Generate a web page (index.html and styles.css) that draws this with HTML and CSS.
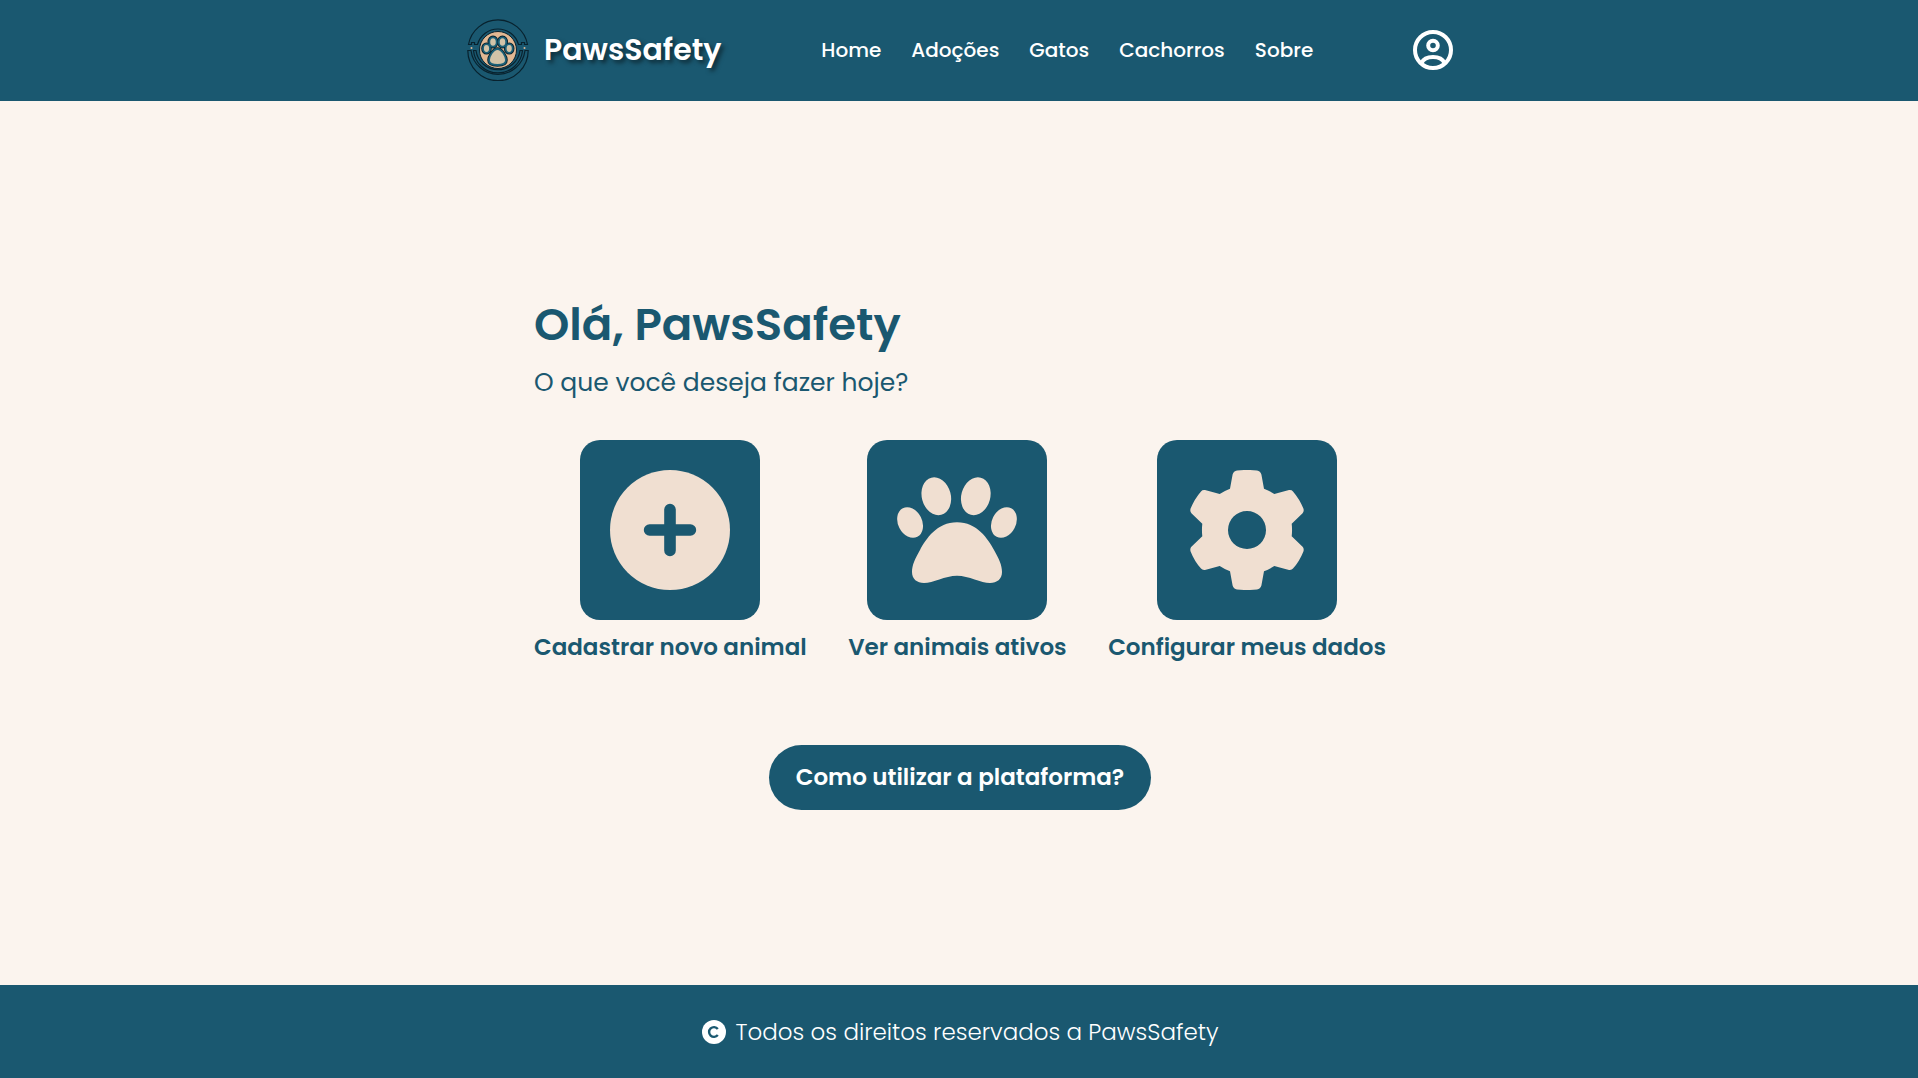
FILE: index.html
```html
<!DOCTYPE html>
<html lang="pt-BR">
<head>
<meta charset="utf-8">
<meta name="viewport" content="width=device-width, initial-scale=1">
<title>PawsSafety</title>
<link rel="stylesheet" href="styles.css">
</head>
<body>
<header class="header">
  <div class="header-inner">
    <a class="brand" href="#">
      <svg class="brand-logo" viewBox="0 0 62 62" aria-hidden="true">
        <g fill="none" stroke="#08222e" stroke-width="1.200">
          <path d="M1.500 25.500A30 30 0 0 1 60.500 25.500H57.500V23.500H54.500V25.500H51.500A21.300 21.300 0 0 0 10.500 25.500H7.500V23.500H4.500V25.500Z"/>
          <path d="M.8 31.500A30 30 0 0 0 61.200 31.500H58A27.200 27.200 0 0 1 4 31.500Z"/>
          <path d="M6.500 31.500A24.600 24.600 0 0 0 55.500 31.500H53A22.200 22.200 0 0 1 9 31.500Z"/>
        </g>
        <circle cx="31" cy="31" r="18.500" fill="#e2b893" stroke="#08222e"/>
        <circle cx="4.500" cy="29" r="1" fill="#e2b893"/>
        <circle cx="57.500" cy="29" r="1" fill="#e2b893"/>
        <g stroke="#08222e" stroke-width="3.600">
          <ellipse cx="26" cy="23" rx="3.700" ry="4.700"/>
          <ellipse cx="35.500" cy="23" rx="3.700" ry="4.700"/>
          <ellipse cx="19.500" cy="29.500" rx="3.500" ry="4.300"/>
          <ellipse cx="42.200" cy="29.500" rx="3.500" ry="4.300"/>
          <path d="M30.500 30C35 30 39 38 39 41C39 45 36 46 30.500 46C25 46 22 45 22 41C22 38 26 30 30.500 30Z"/>
        </g>
        <g fill="#d2c3a8" stroke="#1b6078" stroke-width="1.800">
          <ellipse cx="26" cy="23" rx="3.700" ry="4.700"/>
          <ellipse cx="35.500" cy="23" rx="3.700" ry="4.700"/>
          <ellipse cx="19.500" cy="29.500" rx="3.500" ry="4.300"/>
          <ellipse cx="42.200" cy="29.500" rx="3.500" ry="4.300"/>
          <path d="M30.500 30C35 30 39 38 39 41C39 45 36 46 30.500 46C25 46 22 45 22 41C22 38 26 30 30.500 30Z"/>
        </g>
      </svg>
      <span class="brand-name">PawsSafety</span>
    </a>
    <nav class="nav" aria-label="Principal">
      <a href="#">Home</a>
      <a href="#">Adoções</a>
      <a href="#">Gatos</a>
      <a href="#">Cachorros</a>
      <a href="#">Sobre</a>
    </nav>
    <a class="account" href="#" aria-label="Minha conta">
      <svg viewBox="0 0 40 40" fill="none" stroke="#fff" stroke-width="4" aria-hidden="true">
        <circle cx="20" cy="20" r="18"/>
        <circle cx="20" cy="15.500" r="4.800"/>
        <path d="M8.500 33C10.500 28.500 15 27 20 27S29.500 28.500 31.500 33"/>
      </svg>
    </a>
  </div>
</header>

<main class="main">
  <div class="panel">
    <h1 class="title">Olá, PawsSafety</h1>
    <p class="subtitle">O que você deseja fazer hoje?</p>
    <div class="actions">
      <a class="action" href="#">
        <span class="tile">
          <svg viewBox="0 0 120 120" aria-hidden="true">
            <circle class="shape" cx="60" cy="60" r="60"/>
            <path d="M39.600 60H80.400M60 39.600V80.400" stroke="#1a5870" stroke-width="11.600" stroke-linecap="round"/>
          </svg>
        </span>
        <span class="action-label">Cadastrar novo animal</span>
      </a>
      <a class="action" href="#">
        <span class="tile">
          <svg class="shape" viewBox="0 0 120 120" aria-hidden="true">
            <ellipse cx="39.300" cy="26.200" rx="14.500" ry="19.200" transform="rotate(-15 39.300 26.200)"/>
            <ellipse cx="78.800" cy="26.200" rx="14.500" ry="19.200" transform="rotate(15 78.800 26.200)"/>
            <ellipse cx="13.100" cy="52.500" rx="12" ry="16" transform="rotate(-27 13.100 52.500)"/>
            <ellipse cx="106.900" cy="52.500" rx="12" ry="16" transform="rotate(27 106.900 52.500)"/>
            <path d="M60 52.300C80 52.300 91 69 97 80C102 89 105 95 105 102C105 109 100 113 93 113C84 113 72 105.700 60 105.700C48 105.700 36 113 27 113C20 113 15 109 15 102C15 95 18 89 23 80C29 69 40 52.300 60 52.300Z"/>
          </svg>
        </span>
        <span class="action-label">Ver animais ativos</span>
      </a>
      <a class="action" href="#">
        <span class="tile">
          <svg class="shape" viewBox="0 0 120 120" aria-hidden="true">
            <path fill-rule="evenodd" d="M43 18.700L45.600 4.500Q46.600 .9 50 .5Q60 -.6 70 .5Q73.400 .9 74.400 4.500L77 18.700Q82.400 20.800 87.300 24L102 20Q104.600 19.600 106 21.400Q112.600 29 116.400 38.600Q117.300 41.300 115.600 43.200L104.700 53.700Q105.400 60 104.700 66.300L115.600 76.800Q117.300 78.700 116.400 81.400Q112.600 91 106 98.600Q104.600 100.400 102 100L87.300 96Q82.400 99.200 77 101.300L74.400 115.500Q73.400 119.100 70 119.500Q60 120.600 50 119.500Q46.600 119.100 45.600 115.500L43 101.300Q37.600 99.200 32.700 96L18 100Q15.400 100.400 14 98.600Q7.400 91 3.600 81.400Q2.700 78.700 4.400 76.800L15.300 66.300Q14.600 60 15.300 53.700L4.400 43.200Q2.700 41.300 3.600 38.600Q7.400 29 14 21.400Q15.400 19.600 18 20L32.700 24Q37.600 20.800 43 18.700ZM60 41A19 19 0 1 0 60 79A19 19 0 1 0 60 41Z"/>
          </svg>
        </span>
        <span class="action-label">Configurar meus dados</span>
      </a>
    </div>
    <button class="help" type="button">Como utilizar a plataforma?</button>
  </div>
</main>

<footer class="footer">
  <svg class="footer-icon" viewBox="0 0 24 24" aria-hidden="true">
    <circle cx="12" cy="12" r="12" fill="#fff"/>
    <path d="M15.800 8.900A4.900 4.900 0 1 0 15.800 15.100" fill="none" stroke="#1a5870" stroke-width="2.400"/>
  </svg>
  <p>Todos os direitos reservados a PawsSafety</p>
</footer>
</body>
</html>
```
FILE: styles.css
```css
:root {
  --blue: #1a5870;
  --cream: #fbf4ee;
  --sand: #f0dfd1;
}

* {
  box-sizing: border-box;
  margin: 0;
  padding: 0;
}

body {
  min-height: 100vh;
  display: flex;
  flex-direction: column;
  background: var(--cream);
  color: var(--blue);
  font-family: Poppins, Inter, sans-serif;
}

a {
  color: inherit;
  text-decoration: none;
}

svg {
  display: block;
}

.header {
  background: var(--blue);
  color: #fff;
  padding: 19px 16px 20px 18px;
}

.header-inner {
  max-width: 986px;
  margin: 0 auto;
  display: flex;
  align-items: center;
  justify-content: space-between;
}

.brand {
  display: flex;
  align-items: center;
  gap: 15px;
}

.brand-logo {
  width: 62px;
  height: 62px;
}

.brand-name {
  font-size: 30px;
  font-weight: 600;
  text-shadow: 3px 3px 4px rgba(0, 0, 0, 0.5);
}

.nav {
  display: flex;
  gap: 30px;
  font-size: 20px;
  font-weight: 500;
}

.account svg {
  width: 40px;
  height: 40px;
}

.main {
  flex: 1;
  display: flex;
  align-items: center;
  justify-content: center;
  padding: 40px 16px 40px 18px;
}

.panel {
  width: 100%;
  max-width: 852px;
  padding-top: 12px;
  display: flex;
  flex-direction: column;
}

.title {
  font-size: 45px;
  font-weight: 600;
  line-height: 74px;
}

.subtitle {
  margin-bottom: 36px;
  font-size: 25px;
  line-height: 42px;
}

.actions {
  display: flex;
  flex-wrap: wrap;
  justify-content: space-between;
}

.action {
  display: flex;
  flex-direction: column;
  align-items: center;
  gap: 10px;
}

.tile {
  padding: 30px;
  border-radius: 20px;
  background: var(--blue);
}

.tile svg {
  width: 120px;
  height: 120px;
}

.shape {
  fill: var(--sand);
}

.action-label {
  font-size: 23px;
  font-weight: 600;
  line-height: 35px;
}

.help {
  align-self: center;
  margin-top: 80px;
  padding: 15px 27px;
  border: 0;
  border-radius: 33px;
  background: var(--blue);
  color: #fff;
  font: inherit;
  font-size: 23px;
  font-weight: 600;
  line-height: 35px;
  cursor: pointer;
}

.footer {
  display: flex;
  align-items: center;
  justify-content: center;
  gap: 10px;
  padding: 29px 16px 28px 18px;
  background: var(--blue);
  color: #fff;
  font-size: 23px;
  font-weight: 300;
  line-height: 36px;
}

.footer-icon {
  width: 24px;
  height: 24px;
}
```
